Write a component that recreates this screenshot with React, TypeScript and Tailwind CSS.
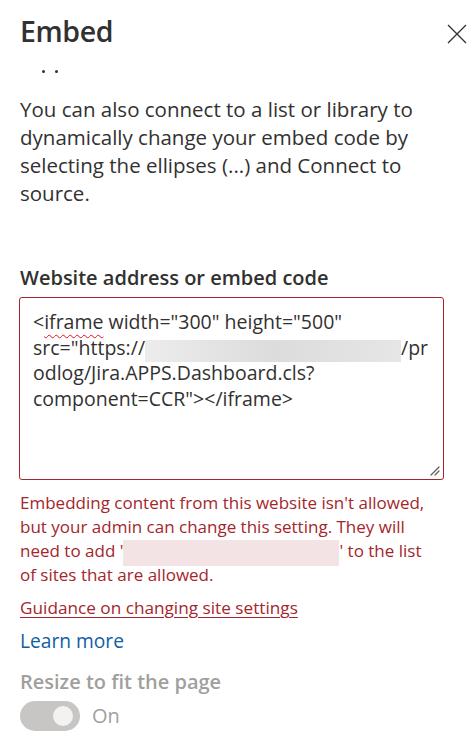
const font = { fontFamily: '"Open Sans", "Noto Sans", sans-serif' };

function CloseIcon() {
  return (
    <svg width="20" height="20" viewBox="0 0 20 20" fill="none">
      <path d="M1 1L19 19M19 1L1 19" stroke="#323130" strokeWidth="1.3" />
    </svg>
  );
}

function ResizeGrip() {
  return (
    <svg width="12" height="12" viewBox="0 0 12 12" className="absolute right-[3px] bottom-[3px]">
      <path d="M11 3L3 11M11 7L7 11" stroke="#605e5c" strokeWidth="1.2" strokeLinecap="round" />
    </svg>
  );
}

function Toggle({ label }: { label: string }) {
  return (
    <div className="flex items-center gap-3">
      <span className="relative w-[60px] h-[30px] rounded-full bg-[#c8c6c4]">
        <span className="absolute right-[7px] top-[5px] w-5 h-5 rounded-full bg-[#f3f2f1]" />
      </span>
      <span className="text-[20px] text-[#a19f9d]">{label}</span>
    </div>
  );
}

export default function App() {
  return (
    <div style={font} className="w-[473px] h-[748px] bg-white overflow-hidden relative text-[#323130]">
      {/* Panel header */}
      <header className="flex items-start justify-between pl-5 pr-[6px] pt-[11px]">
        <h1 className="text-[28.5px] leading-[40px] font-semibold tracking-[-0.4px]">Embed</h1>
        <button className="mt-[13px]">
          <CloseIcon />
        </button>
      </header>

      {/* Bottom of the scrolled-off "..." icon */}
      <div className="flex gap-[10px] pl-[42px] pt-[19px] h-[44px]">
        <span className="w-[3px] h-[3px] rounded-full bg-[#323130]" />
        <span className="w-[3px] h-[3px] rounded-full bg-[#323130]" />
      </div>

      <div className="px-5">
        <p className="text-[20.5px] leading-[28px]">
          <span className="block">You can also connect to a list or library to</span>
          <span className="block">dynamically change your embed code by</span>
          <span className="block">selecting the ellipses (...) and Connect to</span>
          <span className="block">source.</span>
        </p>

        <label className="block mt-[58px] text-[20px] leading-[26px] font-semibold">
          Website address or embed code
        </label>

        <div className="relative mt-[6px] -ml-px w-[425px] h-[183px] border border-[#a4262c] rounded-[3px] pl-[13px] pr-2 pt-[11px] text-[19.5px] leading-[25.5px]">
          <span className="block">
            &lt;<span className="underline decoration-wavy decoration-[#e81123] underline-offset-[5px] decoration-1">iframe</span> width="300" height="500"
          </span>
          <span className="flex h-[25.5px]">
            src="https://
            <span className="w-[256px] h-[22px] mt-[5px] bg-gradient-to-r from-[#ececec] via-[#dcdcdc] to-[#e6e6e6]" />
            /pr
          </span>
          <span className="block">odlog/Jira.APPS.Dashboard.cls?</span>
          <span className="block">component=CCR"&gt;&lt;/iframe&gt;</span>
          <ResizeGrip />
        </div>

        <p className="mt-[11px] text-[17px] leading-[24px] text-[#a4262c]">
          <span className="block">Embedding content from this website isn't allowed,</span>
          <span className="block">but your admin can change this setting. They will</span>
          <span className="flex h-[24px]">
            need to add '
            <span className="w-[216px] h-[26px] mt-[1px] bg-[#f4e3e4]" />' to the list
          </span>
          <span className="block">of sites that are allowed.</span>
        </p>

        <a className="block mt-[9px] text-[17.2px] leading-[24px] text-[#a4262c] underline underline-offset-[3px]">
          Guidance on changing site settings
        </a>

        <a className="block mt-[7px] text-[19.2px] leading-[28px] text-[#115ea3]">Learn more</a>

        <div className="mt-[14px] text-[20px] leading-[26px] font-semibold text-[#a19f9d]">
          Resize to fit the page
        </div>
        <div className="mt-[6px]">
          <Toggle label="On" />
        </div>
      </div>
    </div>
  );
}
